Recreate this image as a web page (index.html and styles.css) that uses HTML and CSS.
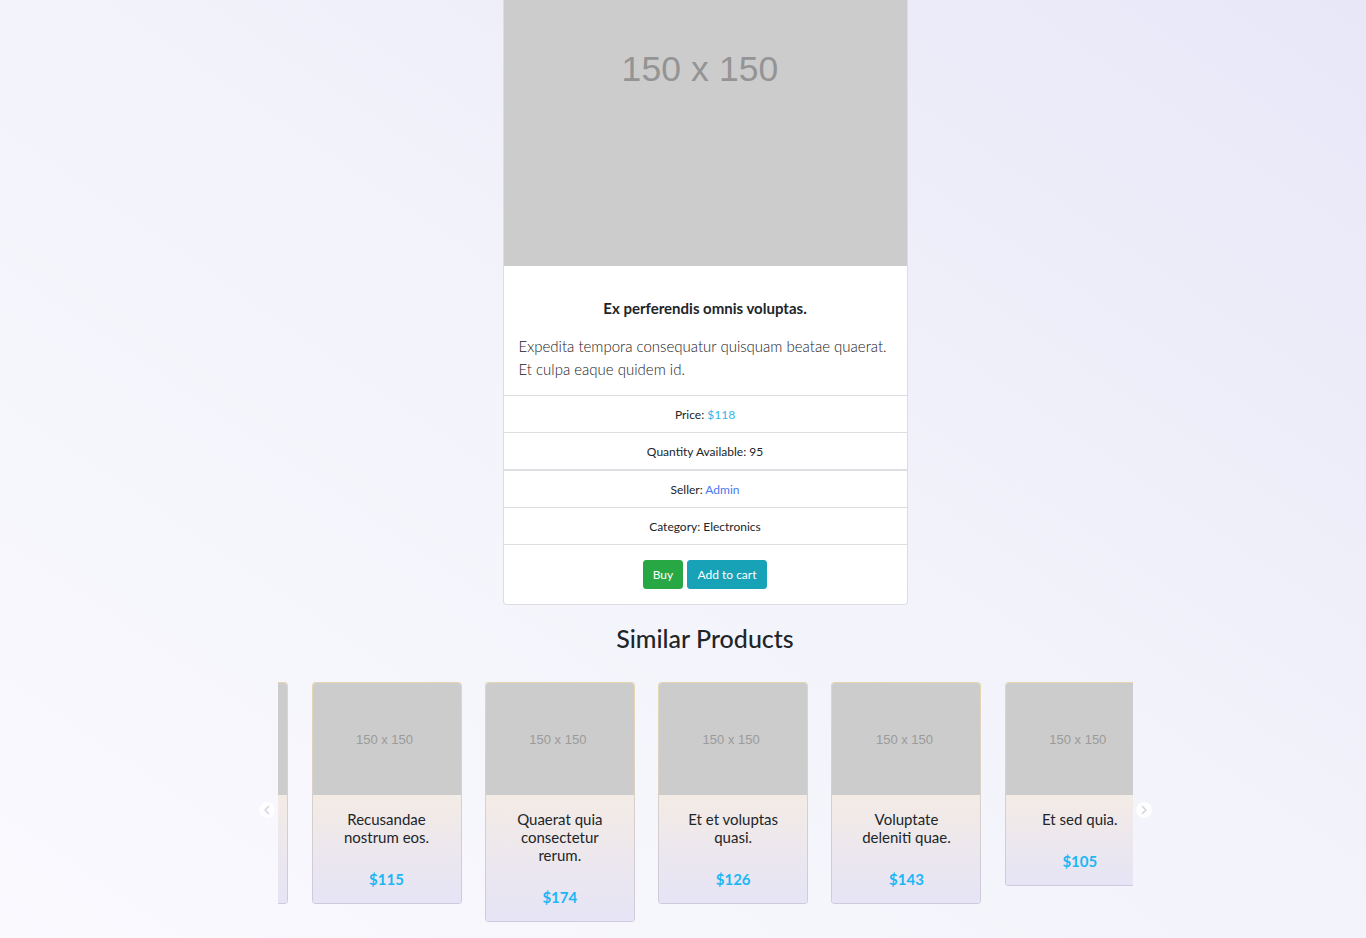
FILE: index.html
```html
<!DOCTYPE html>
<html lang="en">
<head>
<meta charset="utf-8">
<title>Product</title>
<link rel="stylesheet" href="styles.css">
</head>
<body>
<div class="page">
  <div class="container">
    <div class="product-card">
      <div class="product-img"><span>150 x 150</span></div>
      <div class="product-body">
        <h5 class="product-title">Ex perferendis omnis voluptas.</h5>
        <p class="product-desc">Expedita tempora consequatur quisquam beatae quaerat. Et culpa eaque quidem id.</p>
      </div>
      <ul class="list-group">
        <li class="list-item">Price: <span class="price-link">$118</span></li>
        <li class="list-item">Quantity Available: 95</li>
      </ul>
      <ul class="list-group">
        <li class="list-item">Seller: <a class="seller-link" href="#">Admin</a></li>
        <li class="list-item">Category: Electronics</li>
      </ul>
      <div class="actions">
        <button class="btn btn-buy">Buy</button>
        <button class="btn btn-cart">Add to cart</button>
      </div>
    </div>

    <h2 class="section-title">Similar Products</h2>

    <div class="carousel">
      <div class="viewport">
        <div class="track">
          <div class="item">
            <div class="item-img"><span>150 x 150</span></div>
            <div class="item-body"><div class="item-title">Dolorem ipsa sit amet.</div><div class="item-price">$99</div></div>
          </div>
          <div class="item">
            <div class="item-img"><span>150 x 150</span></div>
            <div class="item-body"><div class="item-title">Recusandae nostrum eos.</div><div class="item-price">$115</div></div>
          </div>
          <div class="item">
            <div class="item-img"><span>150 x 150</span></div>
            <div class="item-body"><div class="item-title">Quaerat quia consectetur rerum.</div><div class="item-price">$174</div></div>
          </div>
          <div class="item">
            <div class="item-img"><span>150 x 150</span></div>
            <div class="item-body"><div class="item-title">Et et voluptas quasi.</div><div class="item-price">$126</div></div>
          </div>
          <div class="item">
            <div class="item-img"><span>150 x 150</span></div>
            <div class="item-body"><div class="item-title">Voluptate deleniti quae.</div><div class="item-price">$143</div></div>
          </div>
          <div class="item">
            <div class="item-img"><span>150 x 150</span></div>
            <div class="item-body"><div class="item-title">Et sed quia.</div><div class="item-price">$105</div></div>
          </div>
        </div>
      </div>
      <button class="nav nav-prev" aria-label="previous">
        <svg width="16" height="16" viewBox="0 0 16 16"><path d="M9.5 4.5 6 8l3.5 3.5" fill="none" stroke="#d4d4e2" stroke-width="1.6" stroke-linecap="round" stroke-linejoin="round"/></svg>
      </button>
      <button class="nav nav-next" aria-label="next">
        <svg width="16" height="16" viewBox="0 0 16 16"><path d="M6.5 4.5 10 8l-3.5 3.5" fill="none" stroke="#d4d4e2" stroke-width="1.6" stroke-linecap="round" stroke-linejoin="round"/></svg>
      </button>
    </div>
  </div>
</div>
</body>
</html>
```

FILE: styles.css
```css
* { box-sizing: border-box; }

html, body {
  margin: 0;
  padding: 0;
  height: 100%;
}

body {
  font-family: "Lato", "Open Sans", "Liberation Sans", sans-serif;
  color: #212529;
  background: linear-gradient(to bottom left, #e8e7f8 0%, #f3f3fb 50%, #f9f9fe 100%);
  min-height: 938px;
  overflow: hidden;
}

.page {
  padding-left: 44px;
}

.container {
  width: 855px;
  margin: 0 auto;
  display: flex;
  flex-direction: column;
  align-items: center;
}

/* main product card */
.product-card {
  width: 405px;
  background: #fff;
  border: 1px solid #dcdce2;
  border-top: 0;
  border-radius: 0 0 4px 4px;
  display: flex;
  flex-direction: column;
}

.product-img {
  height: 266px;
  background: #cccccc;
  display: flex;
  justify-content: center;
  padding: 47px 10px 0 0;
}

.product-img span {
  font-family: "Liberation Sans", Arial, sans-serif;
  font-size: 35.5px;
  line-height: 44px;
  height: 44px;
  color: #949494;
  letter-spacing: 0.1px;
}

.product-body {
  padding: 31px 15px 14px;
}

.product-title {
  margin: 0 0 16px;
  font-size: 15px;
  line-height: 22px;
  font-weight: 700;
  text-align: center;
  color: #212529;
}

.product-desc {
  margin: 0;
  font-size: 15px;
  line-height: 23px;
  font-weight: 300;
  color: #1d2024;
}

.list-group {
  list-style: none;
  margin: 0;
  padding: 0;
  border-top: 1px solid #dedee2;
  border-bottom: 1px solid #dedee2;
}

.list-item {
  padding: 9px 15px;
  font-size: 12px;
  line-height: 19px;
  height: 36px;
  text-align: center;
  color: #212529;
}

.list-item + .list-item {
  border-top: 1px solid #dedee2;
  height: 37px;
}

.list-group + .list-group {
  border-top: 1px solid #dedee2;
}

.price-link { color: #33b5e5; }

.seller-link {
  color: #4a78f0;
  text-decoration: none;
}

.actions {
  padding: 15px;
  display: flex;
  justify-content: center;
  gap: 4px;
}

.btn {
  font-family: inherit;
  font-size: 12px;
  line-height: 18px;
  color: #fff;
  border: 1px solid transparent;
  border-radius: 3px;
  height: 29px;
  padding: 4px 0;
  cursor: pointer;
}

.btn-buy {
  background: #28a745;
  border-color: #28a745;
  width: 40px;
}

.btn-cart {
  background: #17a2b8;
  border-color: #17a2b8;
  width: 80px;
}

.section-title {
  margin: 18px 0 0;
  font-size: 25px;
  line-height: 30px;
  font-weight: 500;
  color: #212529;
  text-align: center;
}

/* carousel */
.carousel {
  position: relative;
  width: 855px;
  margin-top: 29px;
}

.viewport {
  overflow: hidden;
  width: 855px;
}

.track {
  display: flex;
  align-items: flex-start;
  gap: 23.33px;
  margin-left: -139.33px;
}

.item {
  flex: 0 0 150px;
  width: 150px;
  border: 1px solid transparent;
  border-radius: 4px;
  overflow: hidden;
  background:
    linear-gradient(#fff, #fff) padding-box,
    linear-gradient(to bottom, #e6d6b2, #cdcadb) border-box;
}

.item-img {
  height: 112px;
  background: #cccccc;
  display: flex;
  align-items: center;
  justify-content: center;
}

.item-img span {
  font-family: "Liberation Sans", Arial, sans-serif;
  font-size: 13px;
  color: #9b9b9b;
  margin: 0 4px 0 0;
}

.item-body {
  background: linear-gradient(to bottom, #f3ebe5, #e6e4f6);
  padding: 15px 17px 15px;
  text-align: center;
}

.item-title {
  font-size: 15px;
  line-height: 18px;
  color: #212529;
}

.item-price {
  margin-top: 24px;
  font-size: 15px;
  line-height: 18px;
  font-weight: 700;
  color: #1cb7f4;
}

.nav {
  position: absolute;
  top: 120px;
  width: 16px;
  height: 16px;
  padding: 0;
  border: 0;
  border-radius: 50%;
  background: rgba(255, 255, 255, 0.85);
  display: flex;
  align-items: center;
  justify-content: center;
  cursor: pointer;
}

.nav-prev { left: -19px; }
.nav-next { right: -19px; }
```
